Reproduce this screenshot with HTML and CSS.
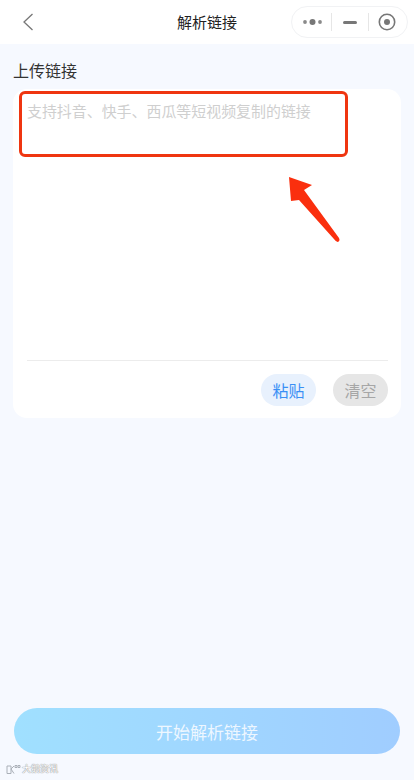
FILE: index.html
```html
<!DOCTYPE html>
<html lang="zh-CN">
<head>
<meta charset="utf-8">
<title>解析链接</title>
<link rel="stylesheet" href="styles.css">
</head>
<body>
<div class="page">
  <header class="nav">
    <svg class="back" width="12" height="18" viewBox="0 0 12 18"><path d="M10.500 1 L2 9 L10.500 17" fill="none" stroke="#777" stroke-width="1.300"/></svg>
    <div class="nav-title">解析链接</div>
    <div class="capsule">
      <svg class="cap-dots" width="20" height="8" viewBox="0 0 20 8"><circle cx="2" cy="4" r="1.900" fill="#8a8a8a"/><circle cx="9.500" cy="4" r="3" fill="#777"/><circle cx="17" cy="4" r="1.900" fill="#8a8a8a"/></svg>
      <span class="cap-sep"></span>
      <span class="cap-minus"></span>
      <span class="cap-sep"></span>
      <svg class="cap-target" width="18" height="18" viewBox="0 0 18 18"><circle cx="9" cy="9" r="7.700" fill="none" stroke="#777" stroke-width="1.600"/><circle cx="9" cy="9" r="3" fill="#777"/></svg>
    </div>
  </header>
  <main class="content">
    <h1 class="label">上传链接</h1>
    <section class="card">
      <div class="input">支持抖音、快手、西瓜等短视频复制的链接</div>
      <div class="actions">
        <button class="pill pill-paste">粘贴</button>
        <button class="pill pill-clear">清空</button>
      </div>
      <div class="highlight"></div>
      <svg class="arrow" width="60" height="76" viewBox="0 0 60 76"><path d="M2 1 L25 9 L17 14 L52 62 Q53.500 65 50.500 66 L48.500 64.800 L12 24 L4 25 Z" fill="#fa2f0e"/></svg>
    </section>
    <button class="start">开始解析链接</button>
  </main>
  <div class="mark">
    <svg class="mark-icon" width="15" height="11" viewBox="0 0 15 11"><path d="M1 2 H5 V9.500 H1 Z M5 5 L8 9.500 M5 5 L8 2 M9 1.500 h2 v2 h-2 Z M12 1.500 h2 v2 h-2 Z" fill="none" stroke="#aab0b8" stroke-width="1"/></svg>
    <span>大鹅资讯</span>
  </div>
</div>
</body>
</html>
```
FILE: styles.css
```css
* { box-sizing: border-box; }
html, body { margin: 0; padding: 0; }
body { font-family: "Noto Sans CJK SC", "Liberation Sans", sans-serif; }
.page { position: relative; width: 414px; height: 780px; display: flex; flex-direction: column; background: #f6f9ff; overflow: hidden; }
.nav { position: relative; height: 44px; flex: none; background: #fff; display: flex; align-items: center; justify-content: center; }
.back { position: absolute; left: 22px; top: 13px; }
.nav-title { font-size: 15px; color: #222; line-height: 22px; }
.capsule { position: absolute; left: 291px; top: 6px; width: 117px; height: 32px; border: 1px solid #f1f2f4; border-radius: 16px; display: flex; align-items: center; padding-left: 11px; background: #fff; }
.cap-dots { margin-right: 8px; }
.cap-sep { width: 1px; height: 18px; background: #e6e6e6; }
.cap-minus { width: 14px; height: 3px; border-radius: 1.500px; background: #777; margin: 0 11px 0 11px; }
.cap-target { margin-left: 9px; }
.content { position: relative; flex: 1; display: flex; flex-direction: column; padding: 14px 13px 26px; }
.label { margin: 0 0 7px; font-size: 16px; font-weight: 400; line-height: 24px; color: #333; }
.card { position: relative; width: 388px; height: 329px; background: #fff; border-radius: 14px; display: flex; flex-direction: column; padding: 11px 13px 12px 14px; }
.input { flex: 1; font-size: 14.950px; line-height: 22px; color: #cfcfcf; border-bottom: 1px solid #ececec; }
.actions { display: flex; justify-content: flex-end; gap: 17px; padding-top: 13px; }
.pill { width: 55px; height: 32px; border: none; border-radius: 16px; padding: 0; font: inherit; font-size: 16px; line-height: 32px; }
.pill-paste { background: #e8f1fd; color: #3a8ff5; }
.pill-clear { background: #e6e6e6; color: #a6a6a6; }
.highlight { position: absolute; left: 6px; top: 2px; width: 329px; height: 66px; border: 3px solid #ef3510; border-radius: 6px; }
.arrow { position: absolute; left: 274px; top: 87px; }
.start { margin-top: auto; margin-left: 1px; width: 386px; height: 46px; border: none; border-radius: 23px; padding: 0; font: inherit; font-size: 17px; color: #eef7ff; background: linear-gradient(90deg, #a0e0ff 0%, #a0cdff 100%); }
.mark { position: absolute; left: 6px; top: 763px; display: flex; align-items: center; gap: 1px; font-size: 9px; line-height: 12px; color: #fff; text-shadow: 0 0 1px #888, 0 0 1px #888; }
```
